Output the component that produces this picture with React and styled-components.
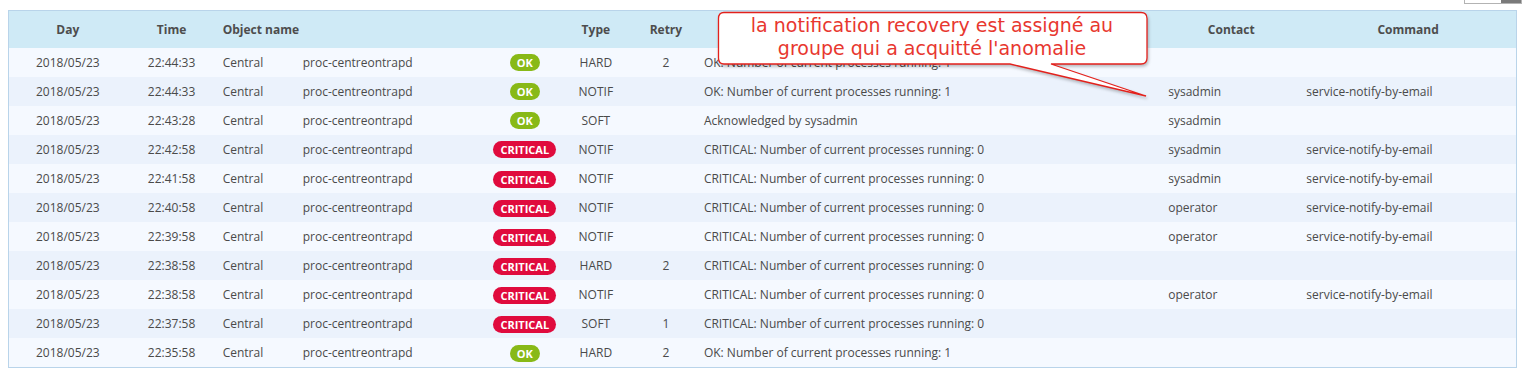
import React from 'react'
import styled, { createGlobalStyle } from 'styled-components'

const GlobalStyle = createGlobalStyle`
  body {
    margin: 0;
    background: #fff;
    font-family: "Open Sans", "Liberation Sans", sans-serif;
  }
`

const Page = styled.div`
  position: relative;
  width: 1522px;
  height: 369px;
  overflow: hidden;
`

const Toolbar = styled.div`
  height: 10px;
  display: flex;
  justify-content: flex-end;
  overflow: hidden;
`

const SelectStub = styled.div`
  width: 58px;
  height: 20px;
  margin-top: -16px;
  border: 1px solid #b3b3b3;
  box-sizing: border-box;
  display: flex;
  justify-content: flex-end;

  span{
    width: 20px;
    background: #7a7a7a;
  }
`

const TableWrap = styled.div`
  margin: 0 5px 0 8px;
`

const Table = styled.table`
  width: 1509px;
  border-collapse: collapse;
  table-layout: fixed;
  border: 1px solid #b9d4ea;
  font-size: 12px;
  color: #4a4a4a;
`

const HeadCell = styled.th`
  height: 37px;
  padding: 0 ${p => (p.$align === 'left' ? '6px' : '0')};
  background: #cfeaf6;
  text-align: ${p => p.$align || 'center'};
  font-weight: 700;
  color: #4d4d4d;
  box-sizing: border-box;
`

const Row = styled.tr`
  background: ${p => (p.$even ? '#ebf2fc' : '#f5f9ff')};
`

const Cell = styled.td`
  height: 29.1px;
  padding: 0 ${p => (p.$align === 'left' ? '6px' : '0')};
  text-align: ${p => p.$align || 'center'};
  white-space: nowrap;
  overflow: hidden;
  box-sizing: border-box;
`

const Badge = styled.span`
  display: inline-block;
  height: 17px;
  line-height: 17px;
  padding: 0 7px;
  border-radius: 9px;
  background: ${p => (p.$status === 'OK' ? '#88b917' : '#e00b3d')};
  color: #fff;
  font-size: 11px;
  font-weight: 700;
  vertical-align: middle;
`

const Callout = styled.div`
  position: absolute;
  left: 717px;
  top: 11px;
  width: 432px;
  height: 88px;
  z-index: 5;

  svg{
    position: absolute;
    left: 0;
    top: 0;
    filter: drop-shadow(1px 2px 1.5px rgba(0,0,0,0.25));
  }
`

const CalloutText = styled.div`
  position: relative;
  width: 430px;
  padding-top: 3px;
  text-align: center;
  font-family: "DejaVu Sans", "Liberation Sans", sans-serif;
  font-size: 19px;
  line-height: 23px;
  color: #e8372f;
`

const cols = [118, 90, 80, 195, 66, 76, 64, 464, 138, 216]

const ok1 = 'OK: Number of current processes running: 1'
const crit = 'CRITICAL: Number of current processes running: 0'
const mail = 'service-notify-by-email'

const rows = [
  ['22:44:33', 'OK', 'HARD', '2', ok1, '', ''],
  ['22:44:33', 'OK', 'NOTIF', '', ok1, 'sysadmin', mail],
  ['22:43:28', 'OK', 'SOFT', '', 'Acknowledged by sysadmin', 'sysadmin', ''],
  ['22:42:58', 'CRITICAL', 'NOTIF', '', crit, 'sysadmin', mail],
  ['22:41:58', 'CRITICAL', 'NOTIF', '', crit, 'sysadmin', mail],
  ['22:40:58', 'CRITICAL', 'NOTIF', '', crit, 'operator', mail],
  ['22:39:58', 'CRITICAL', 'NOTIF', '', crit, 'operator', mail],
  ['22:38:58', 'CRITICAL', 'HARD', '2', crit, '', ''],
  ['22:38:58', 'CRITICAL', 'NOTIF', '', crit, 'operator', mail],
  ['22:37:58', 'CRITICAL', 'SOFT', '1', crit, '', ''],
  ['22:35:58', 'OK', 'HARD', '2', ok1, '', ''],
]

const App = () => {
  return (
    <Page>
      <GlobalStyle />
      <Toolbar>
        <SelectStub><span /></SelectStub>
      </Toolbar>

      <TableWrap>
        <Table>
          <colgroup>
            {cols.map((w, i) => <col key={i} style={{ width: w }} />)}
          </colgroup>
          <thead>
            <tr>
              <HeadCell>Day</HeadCell>
              <HeadCell>Time</HeadCell>
              <HeadCell colSpan={2} $align="left">Object name</HeadCell>
              <HeadCell />
              <HeadCell>Type</HeadCell>
              <HeadCell>Retry</HeadCell>
              <HeadCell />
              <HeadCell>Contact</HeadCell>
              <HeadCell>Command</HeadCell>
            </tr>
          </thead>
          <tbody>
            {rows.map(([time, status, type, retry, output, contact, command], i) => (
              <Row key={i} $even={i % 2 === 1}>
                <Cell>2018/05/23</Cell>
                <Cell>{time}</Cell>
                <Cell $align="left">Central</Cell>
                <Cell $align="left">proc-centreontrapd</Cell>
                <Cell><Badge $status={status}>{status}</Badge></Cell>
                <Cell>{type}</Cell>
                <Cell>{retry}</Cell>
                <Cell $align="left">{output}</Cell>
                <Cell $align="left">{contact}</Cell>
                <Cell $align="left">{command}</Cell>
              </Row>
            ))}
          </tbody>
        </Table>
      </TableWrap>

      <Callout>
        <svg width="432" height="88" viewBox="0 0 432 88">
          <path
            d="M7 1.5 H424 Q430 1.5 430 7.5 V47 Q430 53 424 53 H334 L429 85 L293 53 H7 Q1.5 53 1.5 47 V7.5 Q1.5 1.5 7 1.5 Z"
            fill="#fff"
            stroke="#e3211c"
            strokeWidth="1.3"
          />
        </svg>
        <CalloutText>
          la notification recovery est assigné au<br />
          groupe qui a acquitté l'anomalie
        </CalloutText>
      </Callout>
    </Page>
  )
}

export default App
